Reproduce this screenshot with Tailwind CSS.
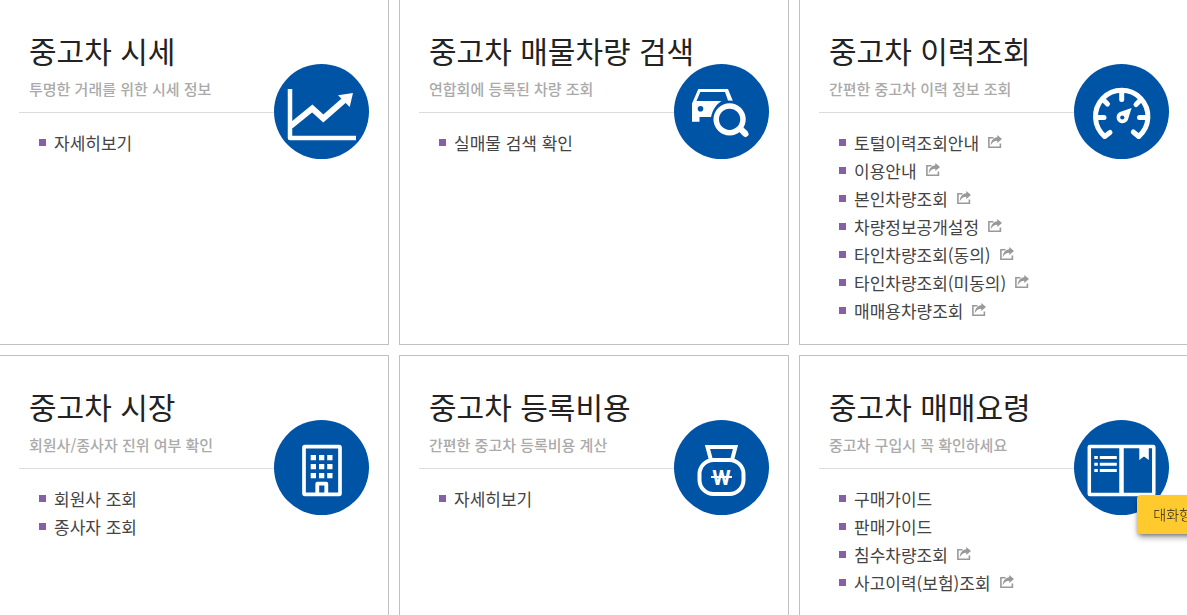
<!DOCTYPE html>
<html lang="ko">
<head>
<meta charset="utf-8">
<meta name="viewport" content="width=device-width, initial-scale=1">
<title>중고차 서비스</title>
<script src="https://cdn.jsdelivr.net/npm/@tailwindcss/browser@4"></script>
</head>
<body class="overflow-hidden bg-white font-['Noto_Sans_CJK_KR',sans-serif] text-[#444]">
<svg class="hidden" aria-hidden="true">
  <symbol id="share" viewBox="0 0 14 13">
    <path d="M5.500 2.800H.9v9.400h11.500V8.600" fill="none" stroke="#999" stroke-width="1.600"/>
    <path d="M9.300 0L14 4 9.300 8V5.700C6.500 5.700 4.500 7 2.700 10.300 3 5.500 5.500 2.600 9.300 2.200z" fill="#999"/>
  </symbol>
</svg>
<main class="-mt-px -mr-0.5 -ml-px grid grid-cols-3 gap-2.5">

  <section class="relative min-h-[346px] border border-[#c0c0c0] px-[19px] pt-[30px] pb-4">
    <header class="border-b border-[#ddd] pb-[13px] pl-2.5">
      <h2 class="text-[30px] leading-10 whitespace-nowrap text-[#222]">중고차 시세</h2>
      <p class="mt-[9px] text-[15px] leading-5 font-medium text-[#aaa]">투명한 거래를 위한 시세 정보</p>
    </header>
    <svg class="absolute top-16 right-[19px] size-[95px]" viewBox="0 0 95 95" aria-hidden="true">
      <circle cx="47.500" cy="47.500" r="47.500" fill="#0054a6"/>
      <path d="M16 25v49h66" fill="none" stroke="#fff" stroke-width="4.500" stroke-linejoin="round"/>
      <path d="M16.700 62L38.300 44.500l11 10L71 35.500" fill="none" stroke="#fff" stroke-width="6"/>
      <path d="M79 29l-15 2.300L75.700 43z" fill="#fff"/>
    </svg>
    <ul class="mt-4 ml-5 text-[17px] leading-7">
      <li class="flex items-center gap-2 before:mb-0.5 before:size-[7px] before:bg-[#8560a8]"><a href="#">자세히보기</a></li>
    </ul>
  </section>

  <section class="relative min-h-[346px] border border-[#c0c0c0] px-[19px] pt-[30px] pb-4">
    <header class="border-b border-[#ddd] pb-[13px] pl-2.5">
      <h2 class="text-[30px] leading-10 whitespace-nowrap text-[#222]">중고차 매물차량 검색</h2>
      <p class="mt-[9px] text-[15px] leading-5 font-medium text-[#aaa]">연합회에 등록된 차량 조회</p>
    </header>
    <svg class="absolute top-16 right-[19px] size-[95px]" viewBox="0 0 95 95" aria-hidden="true">
      <circle cx="47.500" cy="47.500" r="47.500" fill="#0054a6"/>
      <path d="M18 39.500L24.300 25H54l4.800 11.700L54 36.500 51 28H26.300L22.500 37H47.500C42 40.500 38.500 46 37 53H25.500v4.700H18z" fill="#fff"/>
      <circle cx="26.500" cy="44.800" r="2.800" fill="#0054a6"/>
      <circle cx="55.600" cy="55.300" r="13.400" fill="none" stroke="#fff" stroke-width="5.500"/>
      <path d="M65 63.500l6.800 6.500" stroke="#fff" stroke-width="6"/>
      <path d="M70 68.500l1.500 1.500" stroke="#fff" stroke-width="6" stroke-linecap="round"/>
    </svg>
    <ul class="mt-4 ml-5 text-[17px] leading-7">
      <li class="flex items-center gap-2 before:mb-0.5 before:size-[7px] before:bg-[#8560a8]"><a href="#">실매물 검색 확인</a></li>
    </ul>
  </section>

  <section class="relative min-h-[346px] border border-[#c0c0c0] px-[19px] pt-[30px] pb-4">
    <header class="border-b border-[#ddd] pb-[13px] pl-2.5">
      <h2 class="text-[30px] leading-10 whitespace-nowrap text-[#222]">중고차 이력조회</h2>
      <p class="mt-[9px] text-[15px] leading-5 font-medium text-[#aaa]">간편한 중고차 이력 정보 조회</p>
    </header>
    <svg class="absolute top-16 right-[19px] size-[95px]" viewBox="0 0 95 95" aria-hidden="true">
      <circle cx="47.500" cy="47.500" r="47.500" fill="#0054a6"/>
      <g fill="none" stroke="#fff" stroke-width="5" stroke-linecap="round" stroke-linejoin="round">
        <path d="M36 68.500L30.700 72.500A26.200 26.200 0 1 1 64.700 72.500L59.300 68"/>
        <path d="M47.700 29v6.500M23 53.500h7M65.500 53.500h7M29.500 36l4 4M66 36.500l-4 4"/>
      </g>
      <path d="M57.600 44L54 55.500A5.900 5.900 0 1 1 46 48z" fill="#fff"/>
      <circle cx="48.300" cy="53.500" r="2.100" fill="#0054a6"/>
    </svg>
    <ul class="mt-4 ml-5 text-[17px] leading-7">
      <li class="flex items-center gap-2 before:mb-0.5 before:size-[7px] before:bg-[#8560a8]"><a href="#" class="flex items-center gap-[9px]">토털이력조회안내<svg class="mb-[3px] h-[13px] w-3.5"><use href="#share"/></svg></a></li>
      <li class="flex items-center gap-2 before:mb-0.5 before:size-[7px] before:bg-[#8560a8]"><a href="#" class="flex items-center gap-[9px]">이용안내<svg class="mb-[3px] h-[13px] w-3.5"><use href="#share"/></svg></a></li>
      <li class="flex items-center gap-2 before:mb-0.5 before:size-[7px] before:bg-[#8560a8]"><a href="#" class="flex items-center gap-[9px]">본인차량조회<svg class="mb-[3px] h-[13px] w-3.5"><use href="#share"/></svg></a></li>
      <li class="flex items-center gap-2 before:mb-0.5 before:size-[7px] before:bg-[#8560a8]"><a href="#" class="flex items-center gap-[9px]">차량정보공개설정<svg class="mb-[3px] h-[13px] w-3.5"><use href="#share"/></svg></a></li>
      <li class="flex items-center gap-2 before:mb-0.5 before:size-[7px] before:bg-[#8560a8]"><a href="#" class="flex items-center gap-[9px]">타인차량조회(동의)<svg class="mb-[3px] h-[13px] w-3.5"><use href="#share"/></svg></a></li>
      <li class="flex items-center gap-2 before:mb-0.5 before:size-[7px] before:bg-[#8560a8]"><a href="#" class="flex items-center gap-[9px]">타인차량조회(미동의)<svg class="mb-[3px] h-[13px] w-3.5"><use href="#share"/></svg></a></li>
      <li class="flex items-center gap-2 before:mb-0.5 before:size-[7px] before:bg-[#8560a8]"><a href="#" class="flex items-center gap-[9px]">매매용차량조회<svg class="mb-[3px] h-[13px] w-3.5"><use href="#share"/></svg></a></li>
    </ul>
  </section>

  <section class="relative min-h-[346px] border border-[#c0c0c0] px-[19px] pt-[30px] pb-4">
    <header class="border-b border-[#ddd] pb-[13px] pl-2.5">
      <h2 class="text-[30px] leading-10 whitespace-nowrap text-[#222]">중고차 시장</h2>
      <p class="mt-[9px] text-[15px] leading-5 font-medium text-[#aaa]">회원사/종사자 진위 여부 확인</p>
    </header>
    <svg class="absolute top-16 right-[19px] size-[95px]" viewBox="0 0 95 95" aria-hidden="true">
      <circle cx="47.500" cy="47.500" r="47.500" fill="#0054a6"/>
      <rect x="30" y="26.700" width="36" height="47.600" rx="1" fill="none" stroke="#fff" stroke-width="3.700"/>
      <path d="M36.700 35h5.300v5.200h-5.300zM45 35h5.300v5.200H45zM53.200 35h5.300v5.200h-5.300zM36.700 44h5.300v5.200h-5.300zM45 44h5.300v5.200H45zM53.200 44h5.300v5.200h-5.300zM36.700 53h5.300v5.200h-5.300zM45 53h5.300v5.200H45zM53.200 53h5.300v5.200h-5.300z" fill="#fff"/>
      <path d="M43.300 75V63.700h9V75" fill="none" stroke="#fff" stroke-width="3.800" stroke-linejoin="round"/>
    </svg>
    <ul class="mt-4 ml-5 text-[17px] leading-7">
      <li class="flex items-center gap-2 before:mb-0.5 before:size-[7px] before:bg-[#8560a8]"><a href="#">회원사 조회</a></li>
      <li class="flex items-center gap-2 before:mb-0.5 before:size-[7px] before:bg-[#8560a8]"><a href="#">종사자 조회</a></li>
    </ul>
  </section>

  <section class="relative min-h-[346px] border border-[#c0c0c0] px-[19px] pt-[30px] pb-4">
    <header class="border-b border-[#ddd] pb-[13px] pl-2.5">
      <h2 class="text-[30px] leading-10 whitespace-nowrap text-[#222]">중고차 등록비용</h2>
      <p class="mt-[9px] text-[15px] leading-5 font-medium text-[#aaa]">간편한 중고차 등록비용 계산</p>
    </header>
    <svg class="absolute top-16 right-[19px] size-[95px]" viewBox="0 0 95 95" aria-hidden="true">
      <circle cx="47.500" cy="47.500" r="47.500" fill="#0054a6"/>
      <g fill="none" stroke="#fff" stroke-width="4">
        <path d="M36.700 39L33.500 27h28L58.300 39"/>
        <rect x="25.500" y="40" width="44" height="34" rx="14"/>
        <path d="M37 57h21" stroke-width="2"/>
      </g>
      <text x="47.500" y="65" text-anchor="middle" fill="#fff" class="font-[Roboto,sans-serif] text-[21px] font-bold">W</text>
    </svg>
    <ul class="mt-4 ml-5 text-[17px] leading-7">
      <li class="flex items-center gap-2 before:mb-0.5 before:size-[7px] before:bg-[#8560a8]"><a href="#">자세히보기</a></li>
    </ul>
  </section>

  <section class="relative min-h-[346px] border border-[#c0c0c0] px-[19px] pt-[30px] pb-4">
    <header class="border-b border-[#ddd] pb-[13px] pl-2.5">
      <h2 class="text-[30px] leading-10 whitespace-nowrap text-[#222]">중고차 매매요령</h2>
      <p class="mt-[9px] text-[15px] leading-5 font-medium text-[#aaa]">중고차 구입시 꼭 확인하세요</p>
    </header>
    <svg class="absolute top-16 right-[19px] size-[95px]" viewBox="0 0 95 95" aria-hidden="true">
      <circle cx="47.500" cy="47.500" r="47.500" fill="#0054a6"/>
      <rect x="15.300" y="26.500" width="64.500" height="48" rx="0.500" fill="none" stroke="#fff" stroke-width="3.500"/>
      <path d="M47.500 26v49" stroke="#fff" stroke-width="4.500"/>
      <path d="M20.300 36h3.500v3h-3.500zM25.800 36h17v3h-17zM20.300 42.700h3.500v3h-3.500zM25.800 42.700h17v3h-17zM20.300 49h3.500v3h-3.500zM25.800 49h17v3h-17z" fill="#fff"/>
      <path d="M65.300 26h9.500v14L70 36.500 65.300 40z" fill="#fff"/>
    </svg>
    <ul class="mt-4 ml-5 text-[17px] leading-7">
      <li class="flex items-center gap-2 before:mb-0.5 before:size-[7px] before:bg-[#8560a8]"><a href="#">구매가이드</a></li>
      <li class="flex items-center gap-2 before:mb-0.5 before:size-[7px] before:bg-[#8560a8]"><a href="#">판매가이드</a></li>
      <li class="flex items-center gap-2 before:mb-0.5 before:size-[7px] before:bg-[#8560a8]"><a href="#" class="flex items-center gap-[9px]">침수차량조회<svg class="mb-[3px] h-[13px] w-3.5"><use href="#share"/></svg></a></li>
      <li class="flex items-center gap-2 before:mb-0.5 before:size-[7px] before:bg-[#8560a8]"><a href="#" class="flex items-center gap-[9px]">사고이력(보험)조회<svg class="mb-[3px] h-[13px] w-3.5"><use href="#share"/></svg></a></li>
    </ul>
  </section>
</main>
<button type="button" class="fixed -right-[21px] bottom-[81px] rounded bg-[#ffca2e] px-4 py-2.5 text-[14px] leading-[19px] font-light whitespace-nowrap text-[#222] shadow-md shadow-black/40">대화형</button>
</body>
</html>
